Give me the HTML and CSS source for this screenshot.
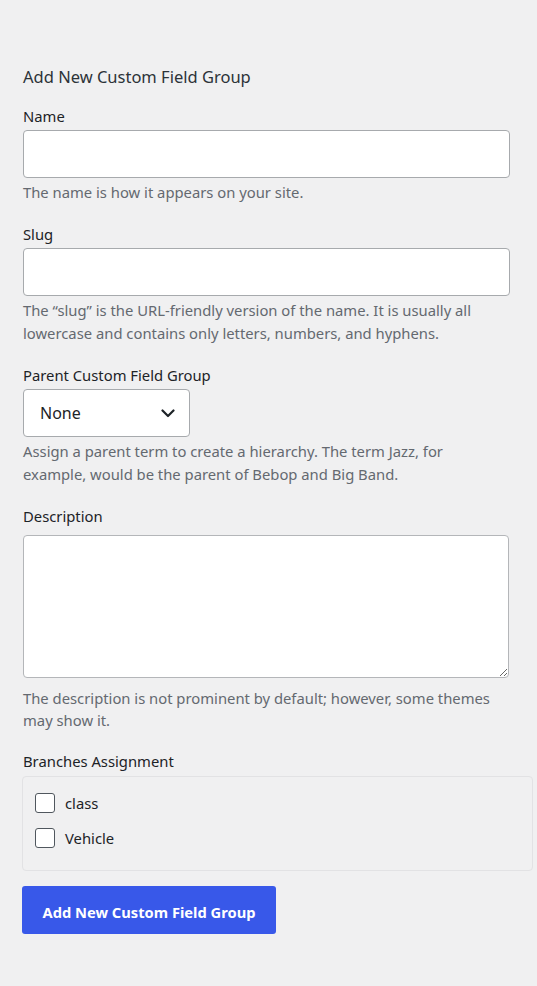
FILE: index.html
```html
<!DOCTYPE html>
<html lang="en">
<head>
<meta charset="utf-8">
<title>Add New Custom Field Group</title>
<link rel="stylesheet" href="styles.css">
</head>
<body>
<div class="form-wrap">
  <h2 class="title">Add New Custom Field Group</h2>
  <form class="term-form">
    <div class="field">
      <label class="label" for="tag-name">Name</label>
      <input class="text-input" id="tag-name" type="text">
      <p class="desc">The name is how it appears on your site.</p>
    </div>
    <div class="field">
      <label class="label" for="tag-slug">Slug</label>
      <input class="text-input" id="tag-slug" type="text">
      <p class="desc">The “slug” is the URL-friendly version of the name. It is usually all lowercase and contains only letters, numbers, and hyphens.</p>
    </div>
    <div class="field">
      <label class="label">Parent Custom Field Group</label>
      <div class="select">
        <span class="select-value">None</span>
        <svg class="chevron" width="14" height="9" viewBox="0 0 14 9"><path d="M1.5 1.5 L7 7 L12.5 1.5" fill="none" stroke="#1d2327" stroke-width="2.2" stroke-linecap="round" stroke-linejoin="round"/></svg>
      </div>
      <p class="desc">Assign a parent term to create a hierarchy. The term Jazz, for example, would be the parent of Bebop and Big Band.</p>
    </div>
    <div class="field">
      <label class="label" for="tag-desc">Description</label>
      <textarea class="textarea" id="tag-desc"></textarea>
      <p class="desc desc-tight">The description is not prominent by default; however, some themes may show it.</p>
    </div>
    <div class="field">
      <span class="label">Branches Assignment</span>
      <div class="checklist">
        <label class="check-row"><input class="checkbox" type="checkbox"><span>class</span></label>
        <label class="check-row"><input class="checkbox" type="checkbox"><span>Vehicle</span></label>
      </div>
    </div>
    <button class="submit" type="button">Add New Custom Field Group</button>
  </form>
</div>
</body>
</html>
```
FILE: styles.css
```css
* { box-sizing: border-box; }
html, body { margin: 0; padding: 0; }
body {
  background: #f0f0f1;
  font-family: "Noto Sans", "Open Sans", sans-serif;
  color: #1d2327;
  font-size: 14.8px;
}
.form-wrap {
  padding: 65px 4px 40px 22px;
}
.title {
  margin: 0 0 16px 1px;
  font-size: 16.5px;
  font-weight: 400;
  line-height: 24px;
  color: #2c3338;
}
.field {
  display: flex;
  flex-direction: column;
  align-items: flex-start;
  margin-bottom: 19px;
}
.label {
  display: block;
  margin-left: 1px;
  line-height: 23px;
  margin-bottom: 2px;
  font-size: 14.8px;
  color: #1d2327;
}
.text-input {
  width: 487px;
  height: 48px;
  margin: 0;
  margin-left: 1px;
  border: 1px solid #a7aaad;
  border-radius: 4px;
  background: #fff;
  font: inherit;
}
.desc {
  margin: 3px 0 0 1px;
  line-height: 23px;
  color: #646970;
  font-size: 14.8px;
  width: 486px;
}
.desc-tight { margin-top: 9px; line-height: 22px; }
.select {
  display: flex;
  align-items: center;
  justify-content: space-between;
  margin-left: 1px;
  width: 167px;
  height: 48px;
  padding: 0 14px 0 16px;
  background: #fff;
  border: 1px solid #a7aaad;
  border-radius: 4px;
}
.select-value {
  font-size: 16px;
  color: #1d2327;
}
.chevron { display: block; }
.textarea {
  display: block;
  width: 486px;
  height: 143px;
  margin: 5px 0 0 1px;
  border: 1px solid #b4b6b9;
  border-radius: 4px;
  background: #fff;
  resize: vertical;
  font: inherit;
}
.checklist {
  width: 511px;
  margin-top: 1px;
  padding: 8px 12px 15px;
  border: 1px solid #e2e2e4;
  border-radius: 4px;
  display: flex;
  flex-direction: column;
}
.check-row {
  display: flex;
  align-items: center;
  gap: 10px;
  height: 35px;
  font-size: 14.8px;
  color: #1d2327;
}
.checkbox {
  appearance: none;
  -webkit-appearance: none;
  margin: 0;
  width: 20px;
  height: 20px;
  border: 1px solid #50575e;
  border-radius: 3px;
  background: #fff;
}
.submit {
  display: block;
  margin-top: -4px;
  width: 254px;
  height: 48px;
  padding: 3px 0 0;
  border: 0;
  border-radius: 3px;
  background: #3858e9;
  color: #fff;
  font-family: inherit;
  font-size: 14.7px;
  font-weight: 700;
}
```
